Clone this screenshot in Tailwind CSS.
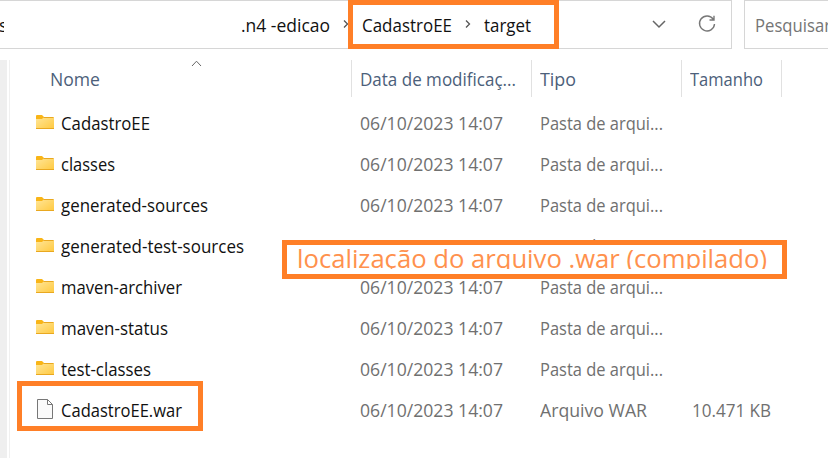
<!DOCTYPE html>
<html lang="pt-BR">
<head>
<meta charset="utf-8">
<title>target</title>
<script src="https://cdn.jsdelivr.net/npm/@tailwindcss/browser@4"></script>
</head>
<body class="bg-white">
<main class="relative flex h-[458px] w-[828px] flex-col overflow-hidden bg-white font-['Open_Sans','Noto_Sans',sans-serif] text-[18px] leading-[24px] whitespace-nowrap text-[#111]">
  <header class="flex h-[49px] shrink-0 gap-[12px]">
    <nav class="flex w-[732px] items-center border-y border-r border-[#d6d6d6]">
      <div class="w-[241px] shrink-0"><div class="w-[4px] overflow-hidden"><span class="-ml-[1px]">s</span></div></div>
      <div class="w-[98px] shrink-0"><span data-w="89">.n4 -edicao</span></div>
      <svg class="mb-[2px] h-[10px] w-[23px] shrink-0" viewBox="0 0 23 10" fill="none" stroke="#555" stroke-width="1.3"><path d="M5 1.5 8.5 5 5 8.5"/></svg>
      <div class="w-[100px] shrink-0"><span data-w="90">CadastroEE</span></div>
      <svg class="mb-[2px] h-[10px] w-[22px] shrink-0" viewBox="0 0 22 10" fill="none" stroke="#555" stroke-width="1.3"><path d="M4 1.5 7.5 5 4 8.5"/></svg>
      <div class="w-[168px] shrink-0"><span data-w="47">target</span></div>
      <svg class="mb-[1px] h-[14px] w-[14px] shrink-0" viewBox="0 0 14 14" fill="none" stroke="#666" stroke-width="1.5"><path d="M1 4 7 10 13 4"/></svg>
      <svg class="mb-[1px] ml-[31px] h-[20px] w-[20px] shrink-0" viewBox="0 0 20 20" fill="none" stroke="#777" stroke-width="1.4"><path d="M16.2 5.2A7.5 7.5 0 1 0 17.5 10M17 1.7V6H12.5"/></svg>
    </nav>
    <div class="flex w-[84px] items-center overflow-hidden border-y border-l border-[#d6d6d6] pt-[1px] pl-[10px] text-[#757575]"><span data-w="76">Pesquisar</span></div>
  </header>
  <section class="flex flex-1 pt-[11px]">
    <aside class="w-[10px] shrink-0 border-r border-[#f0f0f0]"><div class="h-full w-[7px] bg-[#efefef]"></div></aside>
    <div class="flex-1">
      <div class="flex h-[37px] items-center text-[#4c607a]">
        <div class="relative w-[341px] pl-[40px]"><span data-w="50">Nome</span>
          <svg class="absolute -top-[7px] left-[181px] h-[7px] w-[11px]" viewBox="0 0 11 7" fill="none" stroke="#666"><path d="M1 6 5.5 1.2 10 6"/></svg>
        </div>
        <div class="flex h-full w-[180px] items-center border-l border-[#e1e1e1] pl-[8px]"><span data-w="156">Data de modificaç...</span></div>
        <div class="flex h-full w-[150px] items-center border-l border-[#e1e1e1] pl-[8px]"><span data-w="36">Tipo</span></div>
        <div class="flex h-full w-[101px] items-center border-x border-[#e1e1e1] pl-[8px]"><span data-w="73">Tamanho</span></div>
      </div>
      <div id="rows" class="pt-[5px]"></div>
    </div>
  </section>

  <div class="absolute top-0 left-[348px] h-[49px] w-[211px] border-5 border-[#ff7f27]"></div>
  <div class="absolute top-[240px] left-[282px] h-[39px] w-[505px] border-5 border-[#ff7f27] bg-white">
    <div class="h-[24px] overflow-hidden pl-[10px] text-[26px] leading-[27px] font-medium text-[#ff914d]"><span data-w="470" data-size="26" data-weight="500">localização do arquivo .war (compilado)</span></div>
  </div>
  <div class="absolute top-[381px] left-[17px] h-[50px] w-[186px] border-5 border-[#ff7f27]"></div>
</main>

<svg class="absolute h-0 w-0">
  <defs>
    <linearGradient id="folder" x1="0" y1="0" x2="1" y2="1"><stop offset="0" stop-color="#ffe699"/><stop offset="1" stop-color="#ffc93f"/></linearGradient>
  </defs>
</svg>
<script>
  const files = [
    ['CadastroEE', 89], ['classes', 54], ['generated-sources', 147], ['generated-test-sources', 183],
    ['maven-archiver', 121], ['maven-status', 107], ['test-classes', 90], ['CadastroEE.war', 121],
  ];
  const folderIcon = `<svg class="h-[15px] w-[18px]" viewBox="0 0 18 15"><path d="M0 1Q0 0 1 0H6L8 2V6H0Z" fill="#f9b517"/><path d="M0 4H6L8 2H17Q18 2 18 3V14H0Z" fill="url(#folder)"/><path d="M7.5 2.5H17.5M0 13.5H18" stroke="#e9a820" fill="none"/></svg>`;
  const fileIcon = `<svg class="-mt-[1px] ml-[1px] h-[20px] w-[17px]" viewBox="0 0 17 20" fill="#fafafa" stroke="#777"><path d="M.5 .5H10.5L15.5 5.5V19.5H.5ZM10.5 .5V5.5H15.5"/></svg>`;
  document.getElementById('rows').innerHTML = files.map(([name, w]) => {
    const war = name.endsWith('.war');
    return `<div class="flex h-[41px] items-center text-[#707070]">
      <div class="flex w-[350px] items-center pl-[26px] text-[#111]"><div class="w-[25px]">${war ? fileIcon : folderIcon}</div><span data-w="${w}">${name}</span></div>
      <div class="w-[180px]"><span data-w="143">06/10/2023 14:07</span></div>
      <div class="w-[152px]"><span data-w="${war ? 107 : 123}">${war ? 'Arquivo WAR' : 'Pasta de arqui...'}</span></div>
      <div>${war ? '<span data-w="79">10.471 KB</span>' : ''}</div>
    </div>`;
  }).join('');
  // Condense each label to its intended width.
  const ctx = document.createElement('canvas').getContext('2d');
  document.querySelectorAll('[data-w]').forEach(el => {
    ctx.font = `${el.dataset.weight || 400} ${el.dataset.size || 18}px "Open Sans"`;
    el.style.display = 'inline-block';
    el.style.transformOrigin = '0 50%';
    el.style.transform = `scaleX(${el.dataset.w / ctx.measureText(el.textContent).width})`;
  });
</script>
</body>
</html>
